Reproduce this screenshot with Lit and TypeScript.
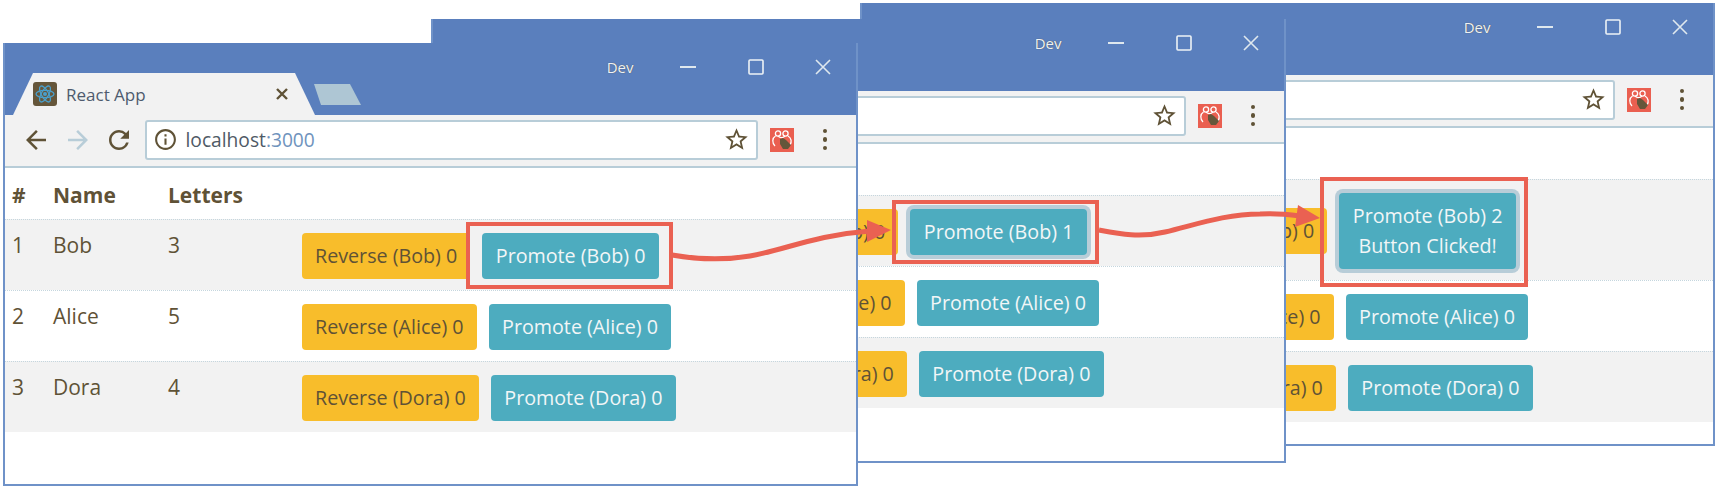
import { LitElement, html, css, svg } from 'lit';

interface Row {
  id: number;
  name: string;
  reverse: number;
  promote: number;
  focused?: boolean;
  clicked?: boolean;
}

interface Win {
  left: number;
  top: number;
  height: number;
  rows: Row[];
}

const people = (bob: number, focused = false, clicked = false): Row[] => [
  { id: 1, name: 'Bob', reverse: 0, promote: bob, focused, clicked },
  { id: 2, name: 'Alice', reverse: 0, promote: 0 },
  { id: 3, name: 'Dora', reverse: 0, promote: 0 },
];

// back to front, later windows cover the earlier ones
const windows: Win[] = [
  { left: 860, top: 3, height: 443, rows: people(2, true, true) },
  { left: 431, top: 19, height: 444, rows: people(1, true) },
  { left: 3, top: 43, height: 443, rows: people(0) },
];

const icon = (d: string, size: number, cls = '') =>
  html`<svg class=${cls} width=${size} height=${size} viewBox="0 0 24 24">${svg`<path d=${d}></path>`}</svg>`;

const BACK = 'M20 11H7.83l5.59-5.59L12 4l-8 8 8 8 1.41-1.41L7.83 13H20v-2z';
const FORWARD = 'M4 11h12.17l-5.59-5.59L12 4l8 8-8 8-1.41-1.41L16.17 13H4v-2z';
const RELOAD = 'M17.65 6.35A7.958 7.958 0 0 0 12 4c-4.42 0-7.99 3.58-7.99 8s3.57 8 7.99 8c3.73 0 6.84-2.55 7.73-6h-2.08A5.99 5.99 0 0 1 12 18c-3.31 0-6-2.69-6-6s2.69-6 6-6c1.66 0 3.14.69 4.22 1.78L13 11h7V4l-2.35 2.35z';
const INFO = 'M11 7h2v2h-2zm0 4h2v6h-2zm1-9C6.48 2 2 6.48 2 12s4.48 10 10 10 10-4.48 10-10S17.52 2 12 2zm0 18c-4.41 0-8-3.59-8-8s3.59-8 8-8 8 3.59 8 8-3.59 8-8 8z';
const STAR = 'M22 9.24l-7.19-.62L12 2 9.19 8.63 2 9.24l5.46 4.73L5.82 21 12 17.27 18.18 21l-1.63-7.03L22 9.24zM12 15.4l-3.76 2.27 1-4.28-3.32-2.88 4.38-.38L12 6.1l1.71 4.04 4.38.38-3.32 2.88 1 4.28L12 15.4z';

const favicon = html`<svg class="favicon" width="24" height="24" viewBox="0 0 24 24">
  <rect width="24" height="24" rx="3" fill="#65563a"></rect>
  <g fill="none" stroke="#4a9fcb" stroke-width="1.3">
    <ellipse cx="12" cy="12" rx="9" ry="3.6"></ellipse>
    <ellipse cx="12" cy="12" rx="9" ry="3.6" transform="rotate(60 12 12)"></ellipse>
    <ellipse cx="12" cy="12" rx="9" ry="3.6" transform="rotate(120 12 12)"></ellipse>
  </g>
  <circle cx="12" cy="12" r="2" fill="#4a9fcb"></circle>
</svg>`;

const extension = html`<svg class="ext" width="24" height="24" viewBox="0 0 24 24">
  <rect width="24" height="24" fill="#ea5f50"></rect>
  <g fill="none" stroke="#fff" stroke-width="1.3">
    <circle cx="8" cy="5.5" r="2.6"></circle>
    <circle cx="15.5" cy="5.5" r="2.6"></circle>
    <path d="M5.5 8C2 10 2 15 5 18M18 8c3.5 2 4 6 2 9M8 8c2 2 5 2 7 0"></path>
  </g>
  <path d="M10 11l3-1 3 2 5 5-3 4-5 0-3-5z" fill="#65563a"></path>
</svg>`;

class BrowserWin extends LitElement {
  static properties = {
    win: { attribute: false },
  };

  win!: Win;

  static styles = css`
    :host {
      position: absolute;
      display: block;
      width: 855px;
      background: #fff;
      overflow: hidden;
      font-family: 'Open Sans', 'Noto Sans', sans-serif;
      color: #5f5236;
    }
    :host::after {
      content: '';
      position: absolute;
      inset: 0;
      border: 2px solid #6f92c8;
      border-top: 0;
      pointer-events: none;
    }
    .title {
      display: flex;
      align-items: flex-start;
      height: 72px;
      background: #5a7fbd;
    }
    .tab {
      display: flex;
      align-items: center;
      box-sizing: border-box;
      width: 302px;
      height: 42px;
      margin: 30px 0 0 10px;
      padding: 0 21px 0 20px;
      background: #f2f2f2;
      clip-path: polygon(0 100%, 20px 0, 282px 0, 100% 100%);
      font-size: 17px;
      color: #4e5b6e;
    }
    .tab .favicon {
      margin-right: 9px;
    }
    .tab .tab-close {
      margin-left: auto;
      margin-right: 6px;
    }
    .new-tab {
      width: 47px;
      height: 21px;
      margin: 41px 0 0 -1px;
      background: #aec6d4;
      clip-path: polygon(0 0, 36px 0, 100% 100%, 7px 100%);
    }
    .controls {
      display: flex;
      align-items: center;
      height: 48px;
      margin-left: auto;
      padding-right: 1px;
    }
    .dev {
      margin-right: 21px;
      font-size: 15px;
      color: #eef2f6;
      text-shadow: 0 0 1px #4d4a3c;
    }
    .ctl {
      display: flex;
      justify-content: center;
      width: 67.5px;
    }
    .toolbar {
      display: flex;
      align-items: center;
      box-sizing: border-box;
      height: 53px;
      padding: 0 0 2px 18px;
      background: #f2f2f2;
      border-bottom: 2px solid #b8cdd8;
      fill: #5f5236;
    }
    .nav {
      display: flex;
      margin-right: 11.5px;
    }
    .nav.off {
      fill: #b8cdd8;
    }
    .address {
      display: flex;
      align-items: center;
      box-sizing: border-box;
      width: 613px;
      height: 40px;
      margin-left: -1px;
      padding: 0 6px 0 6px;
      background: #fff;
      border: 2px solid #b8cdd8;
      border-radius: 3px;
      font-size: 19.2px;
      color: #4f5a66;
    }
    .address .url {
      margin-left: 8px;
    }
    .address .port {
      color: #6f93bd;
    }
    .address .star {
      margin-left: auto;
    }
    .ext {
      margin-left: 12px;
    }
    .kebab {
      display: flex;
      flex-direction: column;
      gap: 4px;
      margin-left: 29px;
    }
    .kebab i {
      width: 4.5px;
      height: 4.5px;
      border-radius: 50%;
      background: #5f5236;
    }
    .row {
      display: grid;
      grid-template-columns: 41px 115px 134px 1fr;
      padding-left: 9px;
      font-size: 19.7px;
    }
    .row.head {
      height: 51px;
      box-sizing: border-box;
      padding-top: 12px;
      line-height: 30px;
      font-size: 21px;
      font-weight: 700;
    }
    .row.body {
      border-top: 1px dotted #c5d6de;
    }
    .row.body:nth-child(even) {
      background: #f2f2f2;
    }
    .cell {
      padding-top: 10px;
      line-height: 30px;
      font-size: 21px;
    }
    .actions {
      display: flex;
      align-items: center;
      gap: 12px;
      padding: 13px 0 11px;
    }
    button {
      padding: 8px 13px;
      border: 0;
      border-radius: 4px;
      font: inherit;
      line-height: 30px;
      white-space: nowrap;
    }
    .reverse {
      background: #f8bd2b;
      color: #5f5236;
    }
    .promote {
      padding: 8px 13.5px;
      background: #4dacbf;
      color: #f2f6f7;
    }
    .promote.focused {
      box-shadow: 0 0 0 4px #b8cdd8;
    }
  `;

  render() {
    const w = this.win;
    return html`
      <div class="title">
        <div class="tab">
          ${favicon}
          <span>React App</span>
          <svg class="tab-close" width="12" height="12" viewBox="0 0 12 12">
            <path d="M1 1l10 10M11 1L1 11" stroke="#5f5236" stroke-width="2.4"></path>
          </svg>
        </div>
        <div class="new-tab"></div>
        <div class="controls">
          <span class="dev">Dev</span>
          <div class="ctl">
            <svg width="16" height="2"><rect width="16" height="2" fill="#dfe8ee"></rect></svg>
          </div>
          <div class="ctl">
            <svg width="16" height="16"><rect x="1" y="1" width="14" height="14" rx="1" fill="none" stroke="#eef3f6" stroke-width="1.6"></rect></svg>
          </div>
          <div class="ctl">
            <svg width="16" height="16"><path d="M1 1l14 14M15 1L1 15" stroke="#dfe8ee" stroke-width="1.6"></path></svg>
          </div>
        </div>
      </div>
      <div class="toolbar">
        <span class="nav">${icon(BACK, 30)}</span>
        <span class="nav off">${icon(FORWARD, 30)}</span>
        <span class="nav">${icon(RELOAD, 30)}</span>
        <div class="address">
          ${icon(INFO, 25)}
          <span class="url">localhost<span class="port">:3000</span></span>
          ${icon(STAR, 27, 'star')}
        </div>
        ${extension}
        <div class="kebab"><i></i><i></i><i></i></div>
      </div>
      <div class="table">
        <div class="row head">
          <span>#</span><span>Name</span><span>Letters</span><span></span>
        </div>
        ${w.rows.map(
          (r) => html`
            <div class="row body">
              <span class="cell">${r.id}</span>
              <span class="cell">${r.name}</span>
              <span class="cell">${r.name.length}</span>
              <div class="actions">
                <button class="reverse">Reverse (${r.name}) ${r.reverse}</button>
                <button class="promote ${r.focused ? 'focused' : ''}">
                  Promote (${r.name}) ${r.promote}${r.clicked ? html`<br />Button Clicked!` : ''}
                </button>
              </div>
            </div>
          `
        )}
      </div>
    `;
  }
}
customElements.define('browser-win', BrowserWin);

class AppRoot extends LitElement {
  static styles = css`
    :host {
      position: relative;
      display: block;
      width: 1718px;
      height: 490px;
      overflow: hidden;
      background: #fff;
    }
    .marks {
      position: absolute;
      inset: 0;
      pointer-events: none;
    }
    .line {
      stroke-width: 5;
    }
  `;

  render() {
    return html`
      ${windows.map(
        (w) => html`<browser-win
          .win=${w}
          style="left:${w.left}px;top:${w.top}px;height:${w.height}px"
        ></browser-win>`
      )}
      <svg class="marks" width="1718" height="490" fill="none" stroke="#ea6152" stroke-width="4">
        <rect x="468" y="224" width="203" height="63"></rect>
        <rect x="894" y="202" width="203" height="60"></rect>
        <rect x="1322" y="179" width="204" height="106"></rect>
        <path class="line" d="M672 255C695 259 720 261 750 256C785 250 815 235 870 231"></path>
        <path class="line" d="M1099 230C1120 234 1140 238 1165 232C1195 225 1225 214 1260 214C1275 213 1285 214 1300 216"></path>
        <path d="M867 220L891 230L867 242z" fill="#ea6152" stroke="none"></path>
        <path d="M1298 205L1320 218L1295 227z" fill="#ea6152" stroke="none"></path>
      </svg>
    `;
  }
}
customElements.define('app-root', AppRoot);
